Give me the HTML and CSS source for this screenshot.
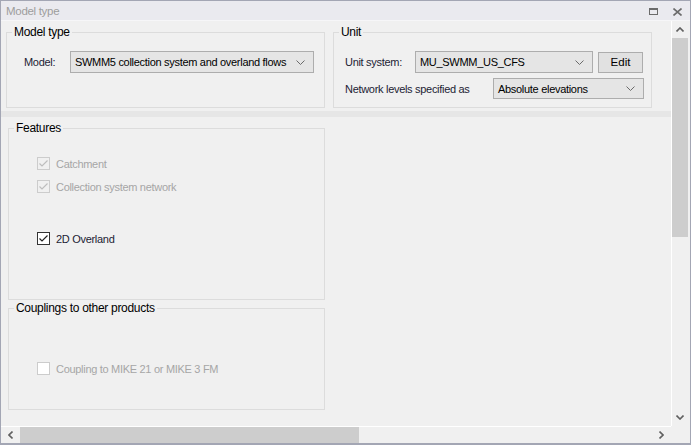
FILE: index.html
```html
<!DOCTYPE html>
<html lang="en">
<head>
<meta charset="UTF-8">
<meta name="viewport" content="width=device-width, initial-scale=1.0">
<title>Model type</title>
<link rel="stylesheet" href="styles.css">
</head>
<body>
    <div class="window">
        <div class="titlebar">
            <span class="title">Model type</span>
            <div class="title-buttons">
                <svg width="9" height="7" viewBox="0 0 9 7"><rect x="0.5" y="0.5" width="8" height="6" fill="none" stroke="#6b6b6b"/><rect x="0" y="0" width="9" height="2" fill="#6b6b6b"/></svg>
                <svg width="9" height="8" viewBox="0 0 9 8"><path d="M0.5 0.5 L8.5 7.5 M8.5 0.5 L0.5 7.5" stroke="#6b6b6b" stroke-width="1.6" fill="none"/></svg>
            </div>
        </div>
        <div class="frame">
            <div class="viewport">
                <div class="top-row">
                    <fieldset class="group model-group">
                        <legend>Model type</legend>
                        <div class="field-row first">
                            <span class="label model-label">Model:</span>
                            <div class="combo model-combo">
                                <span>SWMM5 collection system and overland flows</span>
                                <svg width="9" height="5" viewBox="0 0 9 5"><polyline points="0.5,0.5 4.5,4.5 8.5,0.5" fill="none" stroke="#6a6a6a"/></svg>
                            </div>
                        </div>
                    </fieldset>
                    <fieldset class="group unit-group">
                        <legend>Unit</legend>
                        <div class="field-row first">
                            <span class="label unit-label">Unit system:</span>
                            <div class="combo unit-combo">
                                <span>MU_SWMM_US_CFS</span>
                                <svg width="9" height="5" viewBox="0 0 9 5"><polyline points="0.5,0.5 4.5,4.5 8.5,0.5" fill="none" stroke="#6a6a6a"/></svg>
                            </div>
                            <button class="edit-button">Edit</button>
                        </div>
                        <div class="field-row second">
                            <span class="label levels-label">Network levels specified as</span>
                            <div class="combo levels-combo">
                                <span>Absolute elevations</span>
                                <svg width="9" height="5" viewBox="0 0 9 5"><polyline points="0.5,0.5 4.5,4.5 8.5,0.5" fill="none" stroke="#6a6a6a"/></svg>
                            </div>
                        </div>
                    </fieldset>
                </div>
                <div class="band"></div>
                <fieldset class="group features">
                    <legend>Features</legend>
                    <div class="check-row disabled row-catchment">
                        <span class="box checked"><svg width="11" height="11" viewBox="0 0 11 11"><polyline points="1.5,5.5 4,8 9.5,2.5" fill="none" stroke="#bdbdbd" stroke-width="1.2"/></svg></span>
                        <span>Catchment</span>
                    </div>
                    <div class="check-row disabled row-network">
                        <span class="box checked"><svg width="11" height="11" viewBox="0 0 11 11"><polyline points="1.5,5.5 4,8 9.5,2.5" fill="none" stroke="#bdbdbd" stroke-width="1.2"/></svg></span>
                        <span>Collection system network</span>
                    </div>
                    <div class="check-row active row-overland">
                        <span class="box checked"><svg width="11" height="11" viewBox="0 0 11 11"><polyline points="1.5,5.5 4,8 9.5,2.5" fill="none" stroke="#222" stroke-width="1.2"/></svg></span>
                        <span>2D Overland</span>
                    </div>
                </fieldset>
                <fieldset class="group couplings">
                    <legend>Couplings to other products</legend>
                    <div class="check-row disabled row-coupling">
                        <span class="box empty"></span>
                        <span>Coupling to MIKE 21 or MIKE 3 FM</span>
                    </div>
                </fieldset>
            </div>
            <div class="vscroll">
                <div class="arrow up"><svg width="8" height="5" viewBox="0 0 8 5"><polyline points="0.5,4.5 4,1 7.5,4.5" fill="none" stroke="#606060" stroke-width="1.6"/></svg></div>
                <div class="track"><div class="vthumb"></div></div>
                <div class="arrow down"><svg width="8" height="5" viewBox="0 0 8 5"><polyline points="0.5,0.5 4,4 7.5,0.5" fill="none" stroke="#606060" stroke-width="1.6"/></svg></div>
            </div>
            <div class="hscroll">
                <div class="arrow left"><svg width="5" height="8" viewBox="0 0 5 8"><polyline points="4.5,0.5 1,4 4.5,7.5" fill="none" stroke="#606060" stroke-width="1.6"/></svg></div>
                <div class="track"><div class="hthumb"></div></div>
                <div class="arrow right"><svg width="5" height="8" viewBox="0 0 5 8"><polyline points="0.5,0.5 4,4 0.5,7.5" fill="none" stroke="#606060" stroke-width="1.6"/></svg></div>
            </div>
            <div class="corner"></div>
        </div>
    </div>
</body>
</html>
```
FILE: styles.css
```css
body {
    margin: 0;
    padding: 0;
    font-family: "Liberation Sans", Arial, sans-serif;
    font-size: 11px;
    letter-spacing: -0.3px;
    white-space: nowrap;
    background: #f0f0f0;
}
.window {
    width: 691px;
    height: 445px;
    box-sizing: border-box;
    border: 1px solid #a3a6b4;
    border-bottom-width: 2px;
    background: #f0f0f0;
    display: flex;
    flex-direction: column;
    overflow: hidden;
}
.titlebar {
    height: 20px;
    flex: none;
    background: #eaeaef;
    border-bottom: 1px solid #f6f6f8;
    display: flex;
    align-items: center;
    justify-content: space-between;
    padding: 0 8px 0 5px;
    box-sizing: border-box;
}
.title {
    color: #9d9d9d;
    font-size: 11.5px;
    padding-top: 1px;
}
.title-buttons {
    display: flex;
    align-items: center;
    gap: 15px;
    padding-top: 2px;
}
.frame {
    flex: 1;
    display: grid;
    grid-template-columns: 1fr 17px;
    grid-template-rows: 1fr 17px;
    padding-right: 2px;
    min-height: 0;
}
.viewport {
    overflow: hidden;
    min-width: 0;
    min-height: 0;
}
.top-row {
    display: flex;
    gap: 8px;
    padding: 5px 0 0 5px;
}
.group {
    margin: 0;
    padding: 0;
    border: 1px solid #dcdcdc;
    box-sizing: border-box;
    min-width: 0;
}
.group legend {
    margin-left: 5px;
    padding: 0 2px;
    line-height: 13px;
    color: #000;
    font-size: 12px;
}
.model-group, .unit-group {
    width: 319px;
    height: 82px;
}
.field-row {
    display: flex;
    align-items: center;
}
.field-row.first {
    margin-top: 12px;
}
.field-row.second {
    margin-top: 5px;
}
.label {
    color: #1c1c34;
}
.model-label {
    width: 46px;
    margin-left: 17px;
}
.unit-label {
    width: 70px;
    margin-left: 11px;
}
.levels-label {
    width: 148px;
    margin-left: 11px;
}
.combo {
    height: 22px;
    box-sizing: border-box;
    border: 1px solid #adadad;
    background: #e5e5e5;
    display: flex;
    align-items: center;
    justify-content: space-between;
    padding: 0 8px 0 4px;
    color: #000;
}
.model-combo {
    width: 244px;
}
.unit-combo {
    width: 178px;
}
.levels-combo {
    width: 151px;
    height: 21px;
}
.edit-button {
    width: 45px;
    height: 21px;
    margin-left: 5px;
    border: 1px solid #adadad;
    background: #e1e1e1;
    font-family: inherit;
    font-size: 11.5px;
    color: #000;
    padding: 0;
}
.band {
    height: 6px;
    margin-top: 3px;
    background: #e6e6e6;
}
.features {
    width: 317px;
    height: 178px;
    margin: 5px 0 0 7px;
}
.couplings {
    width: 317px;
    height: 108px;
    margin: 2px 0 0 7px;
}
.check-row {
    display: flex;
    align-items: center;
    gap: 6px;
    height: 13px;
    margin-left: 28px;
}
.check-row.disabled {
    color: #a6a6a6;
}
.check-row.active {
    color: #1c1c34;
}
.row-catchment {
    margin-top: 22px;
}
.row-network {
    margin-top: 10px;
}
.row-overland {
    margin-top: 39px;
}
.row-coupling {
    margin-top: 47px;
}
.box {
    width: 13px;
    height: 13px;
    box-sizing: border-box;
    border: 1px solid #cccccc;
    display: flex;
    align-items: center;
    justify-content: center;
}
.disabled .box.checked {
    background: #f0f0f0;
}
.box.empty {
    background: #ffffff;
}
.active .box {
    border-color: #333333;
    background: #ffffff;
}
.vscroll {
    border-left: 1px solid #ffffff;
    display: flex;
    flex-direction: column;
    background: #f0f0f0;
}
.hscroll {
    border-top: 1px solid #ffffff;
    display: flex;
    background: #f0f0f0;
}
.arrow {
    flex: none;
    display: flex;
    align-items: center;
    justify-content: center;
}
.vscroll .arrow {
    height: 17px;
}
.hscroll .arrow {
    width: 19px;
}
.track {
    flex: 1;
    display: flex;
}
.vthumb {
    width: 100%;
    height: 199px;
    background: #cdcdcd;
}
.hthumb {
    width: 339px;
    height: 100%;
    background: #cdcdcd;
}
.corner {
    background: #f0f0f0;
}
```
